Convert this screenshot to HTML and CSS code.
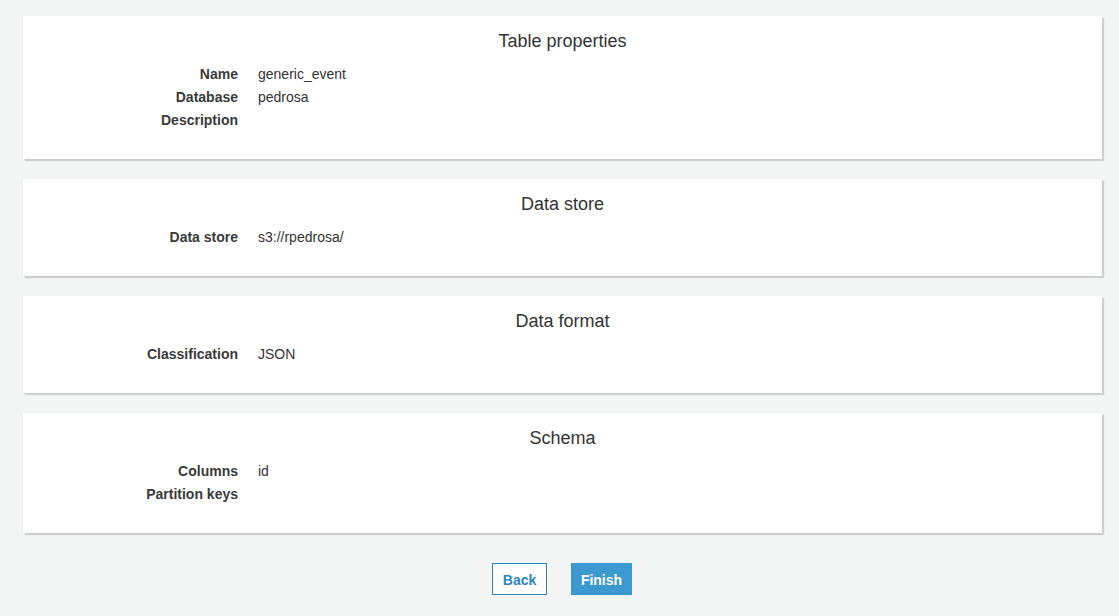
FILE: index.html
```html
<!DOCTYPE html>
<html>
<head>
<meta charset="utf-8">
<link rel="stylesheet" href="styles.css">
</head>
<body>
<main class="page">
  <section class="card">
    <h2 class="card-title">Table properties</h2>
    <div class="row"><span class="label">Name</span><span class="value">generic_event</span></div>
    <div class="row"><span class="label">Database</span><span class="value">pedrosa</span></div>
    <div class="row"><span class="label">Description</span><span class="value"></span></div>
  </section>
  <section class="card">
    <h2 class="card-title">Data store</h2>
    <div class="row"><span class="label">Data store</span><span class="value">s3://rpedrosa/</span></div>
  </section>
  <section class="card">
    <h2 class="card-title">Data format</h2>
    <div class="row"><span class="label">Classification</span><span class="value">JSON</span></div>
  </section>
  <section class="card">
    <h2 class="card-title">Schema</h2>
    <div class="row"><span class="label">Columns</span><span class="value">id</span></div>
    <div class="row"><span class="label">Partition keys</span><span class="value"></span></div>
  </section>
  <div class="actions">
    <button class="btn btn-secondary">Back</button>
    <button class="btn btn-primary">Finish</button>
  </div>
</main>
</body>
</html>
```
FILE: styles.css
```css
html, body {
  margin: 0;
  padding: 0;
  background: #f4f5f5;
  font-family: "Liberation Sans", Arial, Helvetica, sans-serif;
  color: #333;
}
.page {
  padding: 16px 17px 0 23px;
  display: flex;
  flex-direction: column;
  gap: 20px;
}
.card {
  background: #fff;
  box-shadow: 2px 2px 1px rgba(0,0,0,0.12), 1px 1px 3px rgba(0,0,0,0.08);
  padding: 13px 0 27px 0;
}
.card-title {
  margin: 0 0 10px 0;
  font-size: 18px;
  font-weight: normal;
  line-height: 24px;
  text-align: center;
  color: #333;
}
.row {
  display: flex;
  gap: 20px;
  line-height: 23px;
  font-size: 14px;
}
.label {
  width: 215px;
  text-align: right;
  font-weight: bold;
  color: #3a3a3a;
  flex: none;
}
.value {
  color: #333;
}
.actions {
  display: flex;
  justify-content: center;
  gap: 24px;
  margin-top: 10px;
  margin-left: -1px;
}
.btn {
  font-family: "Liberation Sans", Arial, Helvetica, sans-serif;
  font-size: 14px;
  font-weight: bold;
  height: 32px;
  padding: 2px 0 0 0;
  border-radius: 0;
  cursor: pointer;
}
.btn-secondary {
  background: #fff;
  color: #2f86bf;
  border: 1px solid #2f86bf;
  width: 55px;
}
.btn-primary {
  background: #3b99d0;
  color: #fff;
  border: 1px solid #3b99d0;
  width: 61px;
}
```
